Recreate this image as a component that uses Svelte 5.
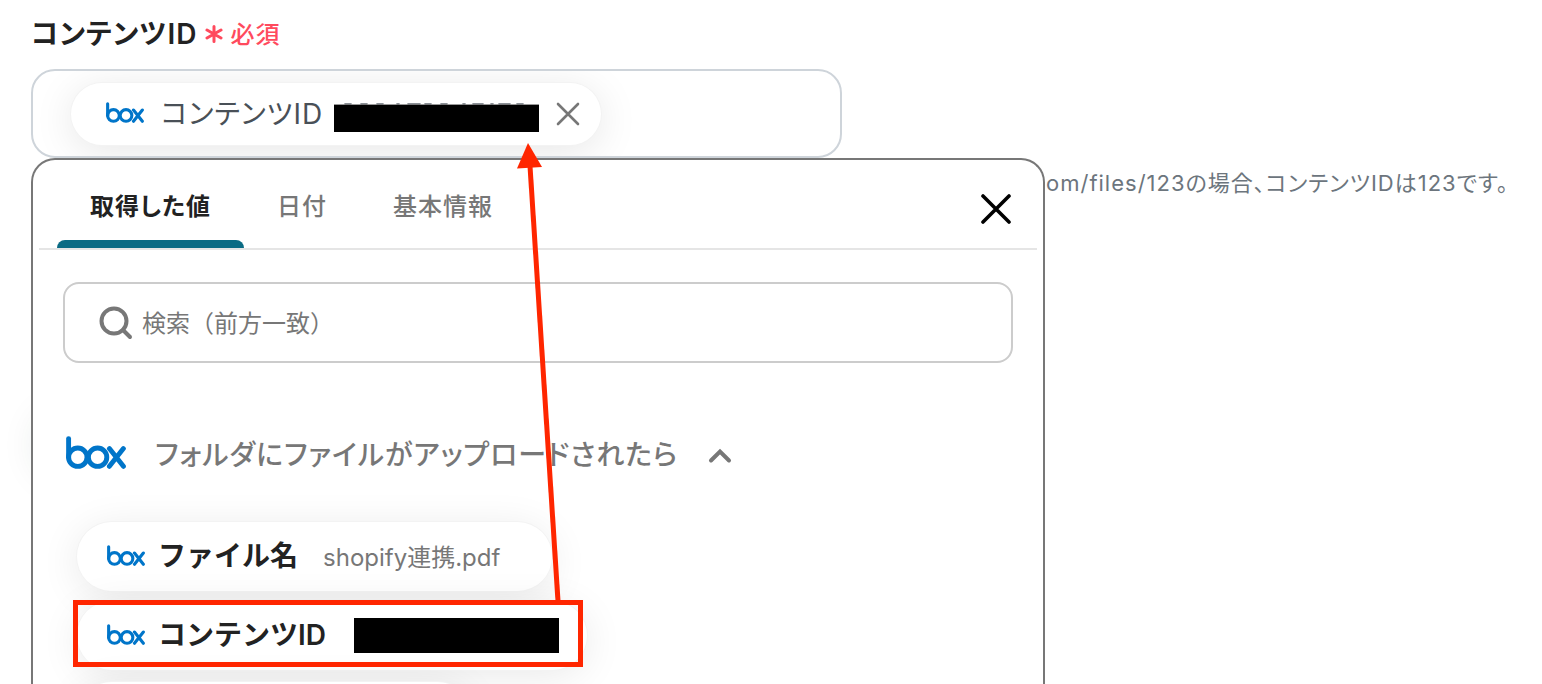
<script lang="ts">
  const tabs = ['取得した値', '日付', '基本情報'];
  let active = $state(0);
</script>

{#snippet boxLogo(size: string)}
  <svg class="logo {size}" viewBox="0 0 60 33" role="img" aria-label="box">
    <g fill="none" stroke="#0075c9" stroke-width="4.9" stroke-linecap="round">
      <path d="M2.6 2.6V21.4" />
      <circle cx="11.8" cy="21.2" r="9.2" />
      <circle cx="31.6" cy="21.2" r="9.2" />
      <path d="M43.4 12.6L57.4 30.3M57.4 12.6L43.4 30.3" />
    </g>
  </svg>
{/snippet}

<main class="page">
  <div class="label-row">
    <span class="label" id="content-id">コンテンツID</span>
    <span class="required">
      <svg viewBox="0 0 18 18" aria-hidden="true"><path d="M9 1.5V16.5M2 5L16 13M16 5L2 13" /></svg>
      必須
    </span>
  </div>

  <div class="field" role="group" aria-labelledby="content-id">
    <div class="token">
      {@render boxLogo('small')}
      <span class="token-name">コンテンツID</span>
      <span class="mask">
        <svg viewBox="0 0 205 29" aria-hidden="true">
          <path d="M11 .8h6M27 .8h6M43 .8h6M63 .8h2M74 .8h12M91 .8h6M107 .8h6M129 .8h2M139 .8h10M157 .8h2M165 .8h11M183 .8h6" stroke="#8b9096" stroke-width="1.6" />
          <rect y="1.6" width="205" height="27.4" />
        </svg>
      </span>
      <button class="remove" aria-label="削除">
        <svg viewBox="0 0 24 24"><path d="M2 2L22 22M22 2L2 22" /></svg>
      </button>
    </div>
  </div>

  <div class="below">
    <section class="panel">
      <header class="panel-head">
        <div class="tabs" role="tablist">
          {#each tabs as tab, i}
            <button role="tab" class="tab" class:active={active === i} aria-selected={active === i} onclick={() => (active = i)}>{tab}</button>
          {/each}
        </div>
        <button class="close" aria-label="閉じる">
          <svg viewBox="0 0 30 30"><path d="M2 2L28 28M28 2L2 28" /></svg>
        </button>
      </header>

      <label class="search">
        <svg viewBox="0 0 34 34" aria-hidden="true"><circle cx="15" cy="15" r="12.5" /><path d="M24 24L31 31" /></svg>
        <input type="text" placeholder="検索（前方一致）" aria-label="検索" />
      </label>

      <button class="group">
        {@render boxLogo('large')}
        <span>フォルダにファイルがアップロードされたら</span>
        <svg class="chevron" viewBox="0 0 24 16" aria-hidden="true"><path d="M3 12.5L12 3.5L21 12.5" /></svg>
      </button>

      <div class="values">
        <button class="value file">
          {@render boxLogo('small')}
          <strong>ファイル名</strong>
          <span class="sample">shopify連携.pdf</span>
        </button>
        <button class="value content">
          {@render boxLogo('small')}
          <strong>コンテンツID</strong>
          <span class="block"></span>
        </button>
        <div class="value next"></div>
      </div>
    </section>
    <p class="help">om/files/123の場合、コンテンツIDは123です。</p>
  </div>

  <svg class="callout" width="1542" height="684" viewBox="0 0 1542 684" aria-hidden="true">
    <rect x="75.5" y="602.5" width="505" height="62" />
    <path d="M558 601L530 166" />
    <polygon points="528,143 517,168.500 542,167" />
  </svg>
</main>

<style>
  :global(body) {
    margin: 0;
    background: #fff;
  }
  .page {
    position: relative;
    box-sizing: border-box;
    height: 100vh;
    overflow: hidden;
    display: flex;
    flex-direction: column;
    padding: 12px 20px 0 31px;
    font-family: Inter, 'Noto Sans CJK JP', sans-serif;
    font-size: 24px;
    color: #222;
  }
  .page::before {
    content: '';
    position: absolute;
    left: 40px;
    top: 415px;
    width: 60px;
    height: 60px;
    border-radius: 30px;
    box-shadow: 0 0 40px rgba(0, 60, 40, 0.14);
  }
  button {
    font: inherit;
    color: inherit;
    background: none;
    border: 0;
    padding: 0;
    cursor: pointer;
  }
  svg {
    display: block;
    flex: none;
  }
  path, circle {
    fill: none;
    stroke-linecap: round;
  }
  .label-row {
    display: flex;
    align-items: center;
    gap: 8px;
    height: 40px;
    margin-bottom: 17px;
    white-space: nowrap;
  }
  .label {
    font-size: 28px;
    font-weight: 600;
    font-feature-settings: 'palt';
    letter-spacing: 1px;
  }
  .required {
    display: flex;
    align-items: center;
    gap: 7px;
    color: #ff4a5d;
    font-weight: 500;
    letter-spacing: 1px;
  }
  .required svg {
    width: 18px;
    padding-top: 4px;
    stroke: #ff4a5d;
    stroke-width: 3;
  }
  .field {
    box-sizing: border-box;
    width: 811px;
    max-width: 100%;
    height: 89px;
    display: flex;
    align-items: center;
    padding-left: 38px;
    border: 2px solid #ced4da;
    border-radius: 24px;
    overflow: hidden;
  }
  .token {
    box-sizing: border-box;
    height: 62px;
    display: flex;
    align-items: center;
    padding: 0 21px 0 35px;
    background: #fff;
    border-radius: 31px;
    box-shadow: 0 0 0 1px #f3f3f3, 0 6px 40px rgba(0, 0, 0, 0.1);
    white-space: nowrap;
  }
  .logo.small {
    width: 38px;
    height: 21px;
    margin-bottom: 2px;
  }
  .logo.large {
    width: 60px;
    height: 33px;
  }
  .token-name {
    margin: 0 11px 0 17px;
    font-size: 28px;
    line-height: 40px;
    font-feature-settings: 'palt';
    letter-spacing: 1px;
    color: #495057;
  }
  .mask {
    padding-top: 8px;
  }
  .mask svg {
    width: 205px;
    height: 29px;
  }
  .remove {
    margin-left: 17px;
  }
  .remove svg {
    width: 24px;
    stroke: #777;
    stroke-width: 2.6;
  }
  .below {
    position: relative;
    flex: 1;
    min-height: 0;
    display: flex;
  }
  .panel {
    box-sizing: border-box;
    width: 1014px;
    flex: none;
    background: #fff;
    border: 2px solid #777;
    border-bottom: 0;
    border-radius: 24px 24px 0 0;
  }
  .panel-head {
    display: flex;
    justify-content: space-between;
    align-items: center;
    height: 88px;
    margin: 0 6px;
    padding: 0 26px 0 18px;
    border-bottom: 2px solid #e5e5e5;
  }
  .tabs {
    display: flex;
    align-self: stretch;
  }
  .tab {
    display: flex;
    flex-direction: column;
    justify-content: space-between;
    padding: 28px 33px 0;
    font-size: 24px;
    font-weight: 500;
    font-feature-settings: 'palt';
    letter-spacing: 1px;
    line-height: 38px;
    color: #777;
  }
  .tab.active {
    color: #222;
    font-weight: 600;
  }
  .tab::after {
    content: '';
    align-self: stretch;
    margin: 0 -33px;
    height: 8px;
    border-radius: 8px 8px 0 0;
  }
  .tab.active::after {
    background: #0b6b84;
  }
  .close {
    padding-top: 10px;
  }
  .close svg {
    width: 30px;
    stroke: #000;
    stroke-width: 3.6;
  }
  .search {
    box-sizing: border-box;
    display: flex;
    align-items: center;
    gap: 9px;
    height: 81px;
    margin: 32px 30px 0;
    padding: 0 34px;
    border: 2px solid #ccc;
    border-radius: 16px;
  }
  .search svg {
    width: 34px;
    stroke: #777;
    stroke-width: 4;
  }
  .search input {
    flex: 1;
    min-width: 0;
    padding: 2px 0 0;
    border: 0;
    outline: 0;
    background: none;
    font: inherit;
    color: #222;
  }
  .search input::placeholder {
    color: #777;
    opacity: 1;
  }
  .group {
    display: flex;
    align-items: center;
    height: 40px;
    margin: 70px 0 0 33px;
    font-size: 28px;
    font-weight: 500;
    font-feature-settings: 'palt';
    letter-spacing: 1px;
    color: #777;
    white-space: nowrap;
  }
  .group .logo {
    margin-bottom: 2px;
  }
  .group span {
    margin: 0 30px 0 29px;
  }
  .chevron {
    width: 24px;
    padding-top: 5px;
    stroke: #777;
    stroke-width: 4;
  }
  .values {
    display: flex;
    flex-direction: column;
    align-items: flex-start;
    gap: 10px;
    margin: 49px 0 0 44px;
  }
  .value {
    box-sizing: border-box;
    height: 69px;
    display: flex;
    align-items: center;
    padding: 0 52px 0 30px;
    background: #fff;
    border-radius: 35px;
    box-shadow: 0 0 0 1px #f3f3f3, 0 6px 40px rgba(0, 0, 0, 0.09);
    white-space: nowrap;
  }
  .value strong {
    margin: 0 25px 2px 13px;
    font-size: 28px;
    line-height: 40px;
    font-weight: 600;
  }
  .value.content {
    padding-right: 28px;
  }
  .value.content strong {
    margin-right: 28px;
  }
  .value.next {
    width: 395px;
    margin-top: 2px;
  }
  .sample {
    padding-bottom: 3px;
    color: #777;
  }
  .block {
    width: 205px;
    height: 35px;
    background: #000;
  }
  .help {
    margin: 9px 0 0 1px;
    font-size: 22px;
    line-height: 32px;
    font-feature-settings: 'palt';
    letter-spacing: 1px;
    color: #6c757d;
    white-space: nowrap;
  }
  .callout {
    position: absolute;
    top: 0;
    left: 0;
    pointer-events: none;
  }
  .callout rect, .callout path {
    fill: none;
    stroke: #ff2600;
    stroke-width: 5;
  }
  .callout path {
    stroke-linecap: butt;
  }
  .callout polygon {
    fill: #ff2600;
  }
</style>
